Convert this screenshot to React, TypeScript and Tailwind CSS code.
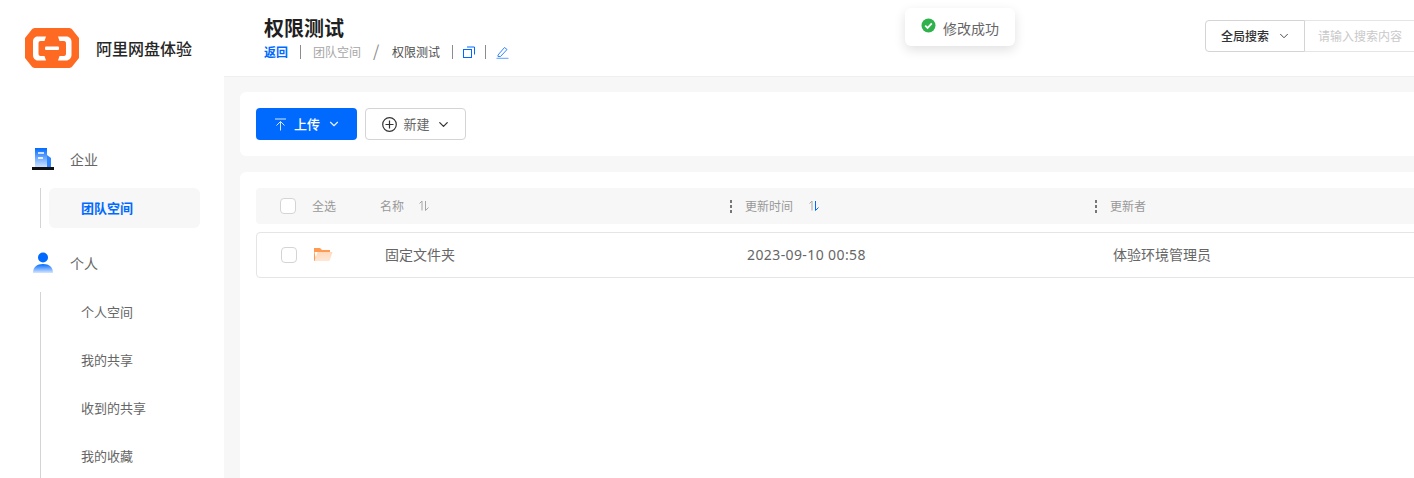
import { ChevronDown } from "lucide-react";

const font = { fontFamily: '"Noto Sans CJK SC", "Noto Sans", sans-serif' };

function Logo() {
  return (
    <svg width="54" height="40" viewBox="0 0 54 40">
      <path d="M10 0H44C46 0 47 1 48 2.500L54 10V30L48 37.500C47 39 46 40 44 40H10C8 40 7 39 6 37.500L0 30V10L6 2.500C7 1 8 0 10 0Z" fill="#ff6a22" />
      <path d="M21 8.500H13C10 8.500 8 10.500 8 13.500V27C8 30 10 32.500 13 32.500H21L19.500 28H15.500C14 28 13.500 27 13.500 25.500V15.500C13.500 14 14 13 15.500 13H19.500Z" fill="#fff" />
      <path d="M33 8.500H41C44 8.500 46.500 10.500 46.500 13.500V27C46.500 30 44 32.500 41 32.500H33L34.500 28H39C40.500 28 41 27 41 25.500V15.500C41 14 40.500 13 39 13H34.500Z" fill="#fff" />
      <rect x="20" y="18.500" width="14" height="3.500" rx="1" fill="#fff" />
    </svg>
  );
}

function BuildingIcon() {
  return (
    <svg width="22" height="23" viewBox="0 0 22 23">
      <defs>
        <linearGradient id="bld" x1="0" y1="0" x2="0" y2="1">
          <stop offset="0" stopColor="#006aff" />
          <stop offset="1" stopColor="#cfe2ff" />
        </linearGradient>
      </defs>
      <rect x="3" y="0" width="12" height="19" fill="url(#bld)" />
      <path d="M15 7L19 10V19H15Z" fill="#2f86ff" />
      <rect x="6" y="4" width="6" height="2" fill="#cfe2ff" />
      <rect x="6" y="9" width="5" height="2" fill="#e6f0ff" />
      <rect x="0" y="19" width="22" height="3" fill="#111" />
    </svg>
  );
}

function PersonIcon() {
  return (
    <svg width="22" height="22" viewBox="0 0 22 22">
      <defs>
        <linearGradient id="prs" x1="0" y1="0" x2="0" y2="1">
          <stop offset="0" stopColor="#006aff" />
          <stop offset="1" stopColor="#d6e6ff" />
        </linearGradient>
      </defs>
      <circle cx="11" cy="5.500" r="5" fill="#006aff" />
      <path d="M1 21C1 15 5 12 11 12C17 12 21 15 21 21Z" fill="url(#prs)" />
    </svg>
  );
}

function SortIcon({ active }: { active?: boolean }) {
  return (
    <svg width="12" height="12" viewBox="0 0 12 12" fill="none" strokeWidth="1">
      <path d="M1.500 3.500L4 1V10.500" stroke="#a6a6a6" />
      <path d="M7.500 1V10.500L10.500 7.500" stroke={active ? "#006aff" : "#a6a6a6"} />
    </svg>
  );
}

function Dots() {
  return (
    <span className="flex flex-col gap-[2px] w-[2px] mr-[13px]">
      <span className="w-[2px] h-[3px] bg-[#777]" />
      <span className="w-[2px] h-[3px] bg-[#777]" />
      <span className="w-[2px] h-[3px] bg-[#777]" />
    </span>
  );
}

function SubItem({ label }: { label: string }) {
  return (
    <div className="h-12 shrink-0 flex items-center pl-[40px] text-[13px] text-[#666]">{label}</div>
  );
}

export default function App() {
  return (
    <div className="relative flex w-[1414px] h-[478px] overflow-hidden bg-[#f7f7f7]" style={font}>
      <aside className="w-[224px] shrink-0 bg-white">
        <div className="flex items-center pl-[25px] pt-[28px] h-[68px]">
          <Logo />
          <span className="ml-[17px] text-base font-medium text-[#262626]">阿里网盘体验</span>
        </div>
        <div className="flex items-center h-6 mt-[79px] pl-[32px]">
          <BuildingIcon />
          <span className="ml-4 text-sm text-[#666]">企业</span>
        </div>
        <div className="ml-10 mt-[17px] border-l border-[#d4d4d4] h-10 pl-2">
          <div className="w-[151px] h-10 rounded-md bg-[#f7f7f7] flex items-center pl-8 text-[13px] font-bold text-[#006aff]">团队空间</div>
        </div>
        <div className="flex items-center h-6 mt-[23px] pl-[32px]">
          <PersonIcon />
          <span className="ml-4 text-sm text-[#666]">个人</span>
        </div>
        <div className="ml-10 mt-[17px] h-[200px] flex flex-col border-l border-[#d4d4d4]">
          <div className="-mt-1 flex flex-col">
            <SubItem label="个人空间" />
            <SubItem label="我的共享" />
            <SubItem label="收到的共享" />
            <SubItem label="我的收藏" />
          </div>
        </div>
      </aside>

      <div className="flex-1 min-w-0">
        <header className="h-[77px] bg-white border-b border-[#f0f0f0] flex justify-between pl-10">
          <div className="pt-[14px]">
            <h1 className="text-xl leading-7 font-bold text-[#1f1f1f]">权限测试</h1>
            <div className="flex items-center h-[18px] mt-[1px] text-xs">
              <span className="font-bold text-[#006aff]">返回</span>
              <span className="w-px h-[14px] bg-[#8c8c8c] mx-3" />
              <span className="text-[#a6a6a6]">团队空间</span>
              <span className="text-[#8c8c8c] text-base mx-3 w-[7px] -mt-1">/</span>
              <span className="text-[#4d4d4d]">权限测试</span>
              <span className="w-px h-[14px] bg-[#8c8c8c] ml-3 mr-[10px]" />
              <svg width="12" height="12" viewBox="0 0 12 12" fill="none" stroke="#006aff">
                <rect x="0.500" y="3.500" width="8" height="8" />
                <path d="M4 1H11.500V8.500" />
              </svg>
              <span className="w-px h-[14px] bg-[#8c8c8c] ml-[10px] mr-[10px]" />
              <svg width="13" height="13" viewBox="0 0 13 13" fill="none" stroke="#2f86ff">
                <path d="M2 9L8.500 1.500L11 3.500L4.500 10.500H2Z" />
                <path d="M0.500 12.500H12.500" strokeWidth="1.500" stroke="#7fb2ff" />
              </svg>
            </div>
          </div>
          <div className="flex mt-5 h-8 w-[209px] shrink-0 text-xs">
            <div className="w-[100px] flex items-center pl-[15px] gap-2 border border-[#d4d4d4] rounded-l font-medium text-[#333]">
              全局搜索
              <ChevronDown size={14} strokeWidth={1.5} className="text-[#333]" />
            </div>
            <div className="flex-1 flex items-center pl-[13px] border-y border-[#e5e5e5] text-[#c9c9c9]">请输入搜索内容</div>
          </div>
        </header>

        <main className="pl-4 pt-[15px] w-[1300px]">
          <section className="h-16 bg-white rounded-md flex items-center gap-2 pl-4">
            <button className="w-[101px] h-8 pl-[2px] rounded bg-[#006aff] text-white text-[13px] font-medium flex items-center justify-center gap-[7px]">
              <svg width="13" height="13" viewBox="0 0 13 13" fill="none" stroke="#d6e6ff">
                <path d="M1 1H12M6.500 12.500V3.500M2.500 7.500L6.500 3.500L10.500 7.500" />
              </svg>
              上传
              <ChevronDown size={14} strokeWidth={2} className="text-[#e6f0ff]" />
            </button>
            <button className="w-[101px] h-8 pl-[2px] rounded border border-[#d4d4d4] text-[#666] text-[13px] flex items-center justify-center gap-[6px]">
              <svg width="15" height="15" viewBox="0 0 15 15" fill="none" stroke="#333" strokeWidth="1.200">
                <circle cx="7.500" cy="7.500" r="6.800" />
                <path d="M7.500 3.500V11.500M3.500 7.500H11.500" />
              </svg>
              新建
              <ChevronDown size={15} strokeWidth={2} className="text-[#333]" />
            </button>
          </section>

          <section className="mt-4 h-[320px] bg-white rounded-t-md px-4 pt-4">
            <div className="h-9 rounded bg-[#f7f7f7] flex items-center text-xs text-[#999]">
              <span className="ml-6 w-4 h-4 rounded-sm border border-[#d4d4d4] bg-white" />
              <span className="ml-4 w-[68px]">全选</span>
              <span className="w-[38px]">名称</span>
              <SortIcon />
              <span className="w-[300px]" />
              <Dots />
              <span className="w-[63px]">更新时间</span>
              <SortIcon active />
              <span className="w-[275px]" />
              <Dots />
              <span>更新者</span>
            </div>
            <div className="mt-2 h-[46px] pb-[2px] rounded border border-[#e5e5e5] flex items-center text-sm text-[#666]">
              <span className="ml-6 mt-[2px] w-4 h-4 rounded-sm border border-[#d4d4d4] bg-white" />
              <svg className="ml-[17px]" width="19" height="15" viewBox="0 0 19 15">
                <defs>
                  <linearGradient id="fld" x1="0" y1="0" x2="0" y2="1">
                    <stop offset="0" stopColor="#ffd9bd" />
                    <stop offset="1" stopColor="#ffe6d4" />
                  </linearGradient>
                </defs>
                <path d="M0 1H6L8 3H16V5H0Z" fill="#ff9a52" />
                <path d="M0 2V14H2Z" fill="#ff9a52" />
                <path d="M3.500 5H18.500L15.500 14H0.500Z" fill="url(#fld)" />
              </svg>
              <span className="ml-[52px] w-[362px]">固定文件夹</span>
              <span className="w-[366px] tracking-[0.4px] mt-[2px]" style={{ fontFamily: '"Noto Sans", sans-serif' }}>2023-09-10 00:58</span>
              <span>体验环境管理员</span>
            </div>
          </section>
        </main>
      </div>

      <div className="absolute left-[905px] top-2 w-[110px] h-[38px] bg-white rounded-md shadow-[0_4px_12px_rgba(0,0,0,0.12)] flex items-center pl-4 gap-[7px] text-sm text-[#666]">
        <svg width="15" height="15" viewBox="0 0 15 15" className="-mt-1">
          <circle cx="7.500" cy="7.500" r="7" fill="#2fb24c" />
          <path d="M4.200 7.600L6.600 9.900L10.800 5.400" fill="none" stroke="#fff" strokeWidth="1.800" />
        </svg>
        <span className="mt-[2px]">修改成功</span>
      </div>
    </div>
  );
}
